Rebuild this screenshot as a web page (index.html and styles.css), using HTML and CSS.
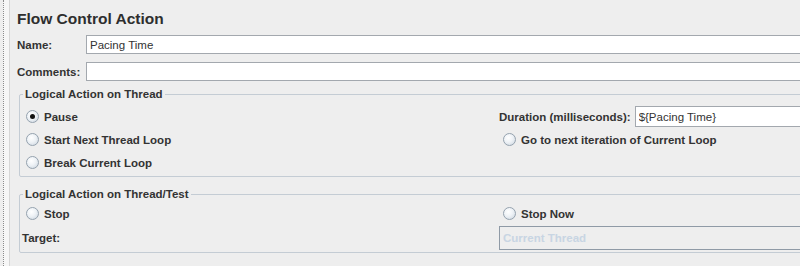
FILE: index.html
```html
<!DOCTYPE html>
<html lang="en">
<head>
    <meta charset="UTF-8">
    <title>Flow Control Action</title>
    <link rel="stylesheet" href="styles.css">
</head>
<body>
    <div class="frame">
        <div class="gutter"></div>
        <div class="panel">
            <div class="title">Flow Control Action</div>

            <div class="field-row">
                <label class="field-label">Name:</label>
                <input class="text-input" type="text" value="Pacing Time">
            </div>
            <div class="field-row">
                <label class="field-label">Comments:</label>
                <input class="text-input" type="text" value="">
            </div>

            <!-- Logical action on thread -->
            <fieldset class="group">
                <legend>Logical Action on Thread</legend>
                <div class="group-grid">
                    <label class="radio"><span class="dot checked"></span>Pause</label>
                    <div class="duration">
                        <span class="bold-label">Duration (milliseconds):</span>
                        <input class="text-input tall" type="text" value="${Pacing Time}">
                    </div>
                    <label class="radio"><span class="dot"></span>Start Next Thread Loop</label>
                    <label class="radio"><span class="dot"></span>Go to next iteration of Current Loop</label>
                    <label class="radio"><span class="dot"></span>Break Current Loop</label>
                    <div></div>
                </div>
            </fieldset>

            <!-- Logical action on thread/test -->
            <fieldset class="group second">
                <legend>Logical Action on Thread/Test</legend>
                <div class="group-grid target-grid">
                    <label class="radio"><span class="dot"></span>Stop</label>
                    <label class="radio"><span class="dot"></span>Stop Now</label>
                    <span class="bold-label target">Target:</span>
                    <div class="target-box">Current Thread</div>
                </div>
            </fieldset>
        </div>
    </div>
</body>
</html>
```

FILE: styles.css
```css
body {
    margin: 0;
    background-color: #eeeeee;
    font-family: Arial, "Liberation Sans", sans-serif;
    color: #333;
    overflow: hidden;
}
.frame {
    display: flex;
    width: 860px;
    height: 266px;
}
.gutter {
    width: 5px;
    margin-left: 3px;
    border-left: 1px dotted #8a8a8a;
    border-right: 1px solid #d6d6d6;
    background-color: #f6f6f6;
}
.panel {
    flex: 1;
    padding: 10px 0 0 7px;
}
.title {
    font-size: 15.5px;
    font-weight: bold;
    line-height: 18px;
    margin-bottom: 7px;
    color: #2e2e2e;
}
.field-row {
    display: flex;
    align-items: center;
    margin-bottom: 8px;
}
.field-label {
    width: 69px;
    font-size: 11.5px;
    font-weight: bold;
}
.text-input {
    flex: 1;
    height: 19px;
    box-sizing: border-box;
    border: 1px solid #a3a8ae;
    background-color: #fff;
    padding: 0 3px;
    font-family: Arial, "Liberation Sans", sans-serif;
    font-size: 11.5px;
    color: #333;
    outline: none;
}
.text-input.tall {
    height: 21px;
}
/* Group boxes */
.group {
    margin: -2px 0 0 2px;
    padding: 4px 0 2px 2px;
    border: 1px solid #c4ccd4;
    border-radius: 2px;
}
.group.second {
    margin-top: 10px;
    padding-top: 1px;
    padding-bottom: 1px;
}
.group legend {
    font-size: 11.5px;
    font-weight: bold;
    line-height: 14px;
    padding: 0 2px;
    margin-left: 1px;
}
.group-grid {
    display: grid;
    grid-template-columns: 477px 1fr;
    grid-auto-rows: 23px;
    align-items: center;
}
.target-grid {
    grid-template-rows: 23px 26px;
}
.radio {
    display: flex;
    align-items: center;
    font-size: 11.5px;
    font-weight: bold;
}
.dot {
    width: 11px;
    height: 11px;
    margin: 0 5px 0 4px;
    border: 1px solid #95a2ae;
    border-radius: 50%;
    background: radial-gradient(circle at 40% 35%, #ffffff 0%, #eef2f6 45%, #c9d3dd 100%);
    position: relative;
}
.dot.checked::after {
    content: "";
    position: absolute;
    left: 3px;
    top: 3px;
    width: 5px;
    height: 5px;
    border-radius: 50%;
    background-color: #111;
}
.bold-label {
    font-size: 11.5px;
    font-weight: bold;
}
.duration {
    display: flex;
    align-items: center;
    gap: 4px;
}
.target-box {
    align-self: start;
    margin-top: 1px;
    height: 24px;
    box-sizing: border-box;
    border: 1px solid #8f9aa6;
    padding: 0 3px;
    display: flex;
    align-items: center;
    font-size: 11.5px;
    font-weight: bold;
    color: #c8d5e3;
}
```
